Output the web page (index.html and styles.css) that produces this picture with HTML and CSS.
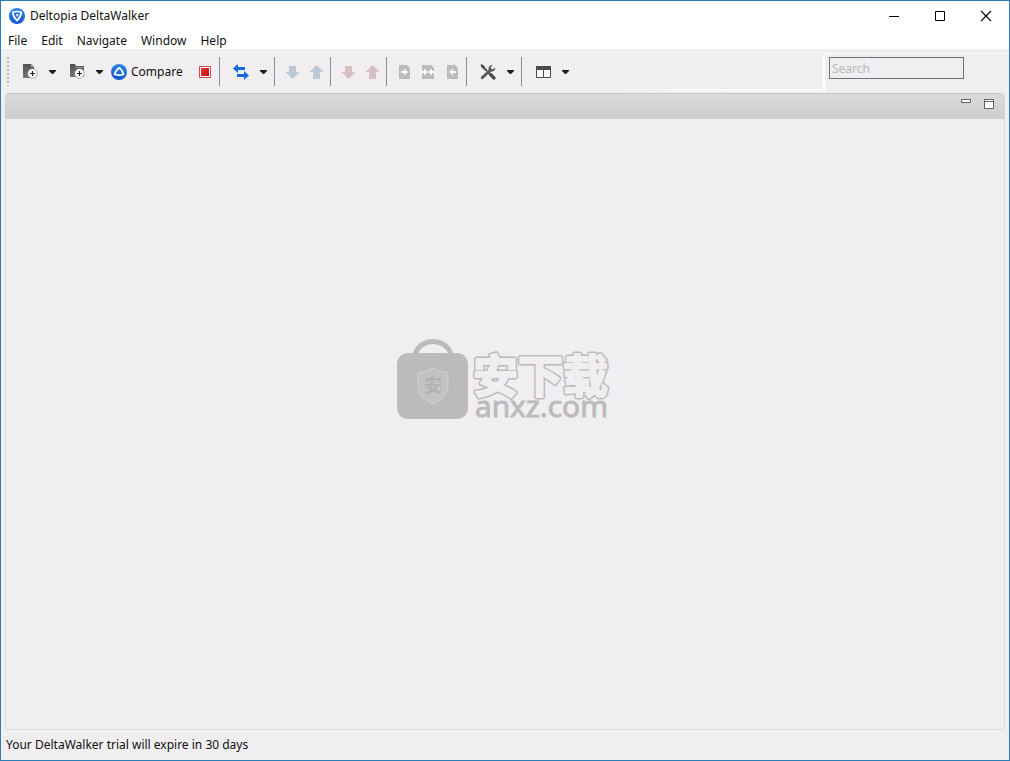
FILE: index.html
```
<!DOCTYPE html>
<html lang="en">
<head>
<meta charset="utf-8">
<title>Deltopia DeltaWalker</title>
<link rel="stylesheet" href="styles.css">
</head>
<body>
<svg class="defs" aria-hidden="true">
  <defs>
    <linearGradient id="dark" x1="0" y1="0" x2="0" y2="1"><stop offset="0" stop-color="#505052"/><stop offset="1" stop-color="#77777a"/></linearGradient>
    <linearGradient id="blue" x1="0" y1="0" x2="0" y2="1"><stop offset="0" stop-color="#2b86ea"/><stop offset="1" stop-color="#1553cf"/></linearGradient>
    <linearGradient id="red" x1="0" y1="0" x2="1" y2="1"><stop offset="0" stop-color="#e8383c"/><stop offset="1" stop-color="#c60d14"/></linearGradient>
    <symbol id="caret" viewBox="0 0 7 4"><path d="M0 0h7v1L4 4H3L0 1z" fill="#1c1c1e"/></symbol>
    <g id="plus"><circle cx="10.500" cy="9.500" r="4.800" fill="#fff" stroke="#88888b" stroke-width=".7"/><path d="M10.500 7v5M8 9.500h5" stroke="#222" stroke-width="1.200"/></g>
    <symbol id="down" viewBox="0 0 16 16"><path d="M5 2h7v6h3.500l-7 7-7-7H5z"/></symbol>
    <symbol id="up" viewBox="0 0 16 16"><path d="M5 15h7V8h3.500l-7-7-7 7H5z"/></symbol>
  </defs>
</svg>
<div class="window">
  <header class="titlebar">
    <svg class="logo" viewBox="0 0 16 16"><circle cx="8" cy="8" r="8" fill="url(#blue)"/><path d="M3.700 4.300q4.300-1.600 8.600 0Q11.800 9 8 12.600 4.200 9 3.700 4.300z" fill="none" stroke="#fff" stroke-width="1.700" stroke-linejoin="round"/><path d="M7 6.300h3L8 9z" fill="#fff"/></svg>
    <h1 class="title">Deltopia DeltaWalker</h1>
    <div class="controls">
      <button class="control" aria-label="Minimize"><svg viewBox="0 0 12 12"><path d="M1 6.500h10" stroke="#000"/></svg></button>
      <button class="control" aria-label="Maximize"><svg viewBox="0 0 12 12"><path d="M1.500 1.500h9v9h-9z" fill="none" stroke="#000"/></svg></button>
      <button class="control" aria-label="Close"><svg viewBox="0 0 12 12"><path d="M1 1l10 10M11 1L1 11" stroke="#000" stroke-width="1.100"/></svg></button>
    </div>
  </header>
  <nav class="menubar">
    <button class="menu">File</button>
    <button class="menu">Edit</button>
    <button class="menu">Navigate</button>
    <button class="menu">Window</button>
    <button class="menu">Help</button>
  </nav>
  <div class="toolrow">
    <div class="toolbar" role="toolbar">
      <span class="grip"></span>
      <div class="group lead">
        <button class="tool" aria-label="New file comparison"><svg viewBox="0 0 16 16"><path d="M1 0h8l3 3v11H1z" fill="url(#dark)"/><path d="M9 0v3h3z" fill="#aaaaad"/><use href="#plus"/></svg></button>
        <button class="drop" aria-label="File comparison options"><svg><use href="#caret"/></svg></button>
        <button class="tool next" aria-label="New folder comparison"><svg viewBox="0 0 16 16"><path d="M1 0h5l1 2h8v11H1z" fill="url(#dark)"/><path d="M7 3h8v1H6z" fill="#8c8c8f"/><use href="#plus"/></svg></button>
        <button class="drop" aria-label="Folder comparison options"><svg><use href="#caret"/></svg></button>
        <button class="compare"><svg viewBox="0 0 16 16"><circle cx="8" cy="8" r="8" fill="url(#blue)"/><path d="M8.500 3.800Q5.500 5.500 3.500 10.300q4.500 1.700 9 .2Q11.800 6.500 8.500 3.800z" fill="none" stroke="#fff" stroke-width="1.700" stroke-linejoin="round"/></svg>Compare</button>
        <button class="tool" aria-label="Stop"><svg viewBox="0 0 16 16"><path d="M2.500 2.500h11v11h-11z" fill="#fff" stroke="#c4484c"/><path d="M4 4h8v8H4z" fill="url(#red)"/></svg></button>
      </div>
      <div class="group wide">
        <button class="tool" aria-label="Swap sides"><svg viewBox="0 0 16 16"><path d="M0 4.500L5 0v3h7v3H5v3zM16 11.500L11 7v3H4v3h7v3z" fill="#1668dc"/></svg></button>
        <button class="drop" aria-label="Swap options"><svg><use href="#caret"/></svg></button>
      </div>
      <div class="group">
        <button class="tool steel" aria-label="Next difference"><svg><use href="#down"/></svg></button>
        <button class="tool steel" aria-label="Previous difference"><svg><use href="#up"/></svg></button>
      </div>
      <div class="group">
        <button class="tool rose" aria-label="Next conflict"><svg><use href="#down"/></svg></button>
        <button class="tool rose" aria-label="Previous conflict"><svg><use href="#up"/></svg></button>
      </div>
      <div class="group">
        <button class="tool pale" aria-label="Copy right"><svg viewBox="0 0 16 16"><path d="M3 1h8l3 3v11H3z"/><path d="M5 7h3V4.500L12 8l-4 3.500V9H5z" fill="#fff"/></svg></button>
        <button class="tool pale" aria-label="Merge both"><svg viewBox="0 0 16 16"><path d="M2 1h9l3 3v11H2z"/><path d="M1 7h3V4.500L8 8l-4 3.500V9H1zM15 7h-3V4.500L8 8l4 3.500V9h3z" fill="#fff"/></svg></button>
        <button class="tool pale" aria-label="Copy left"><svg viewBox="0 0 16 16"><path d="M3 1h8l3 3v11H3z"/><path d="M12 7H9V4.500L5 8l4 3.500V9h3z" fill="#fff"/></svg></button>
      </div>
      <div class="group wide">
        <button class="tool" aria-label="Tools"><svg viewBox="0 0 16 16"><path d="M2 2l5 5M8.500 8.500l5 5" stroke="#4a4a4c" stroke-width="2"/><path d="M10.500 10.500l3.500 3.500" stroke="#4a4a4c" stroke-width="3.200" stroke-linecap="round"/><path d="M.5 1L1.500 0 4.500 2 5 5 2 4z" fill="#4a4a4c"/><path d="M2.200 13.800L10.500 6" stroke="#58585a" stroke-width="2.800" stroke-linecap="round"/><path d="M12.800.8A4 4 0 0 0 8.700 6L10.500 7.500A4 4 0 0 0 15.400 3.400L13.200 5.200 11 4.800 10.800 2.800z" fill="#58585a"/></svg></button>
        <button class="drop" aria-label="Tools options"><svg><use href="#caret"/></svg></button>
      </div>
      <div class="group wide">
        <button class="tool" aria-label="Layout"><svg viewBox="0 0 16 16"><path d="M1.500 2.500h14v11h-14z" fill="#fafafa" stroke="#4c4c4e"/><path d="M1 2h15v4H1z" fill="#4c4c4e"/><path d="M8.500 6v8" stroke="#4c4c4e"/></svg></button>
        <button class="drop" aria-label="Layout options"><svg><use href="#caret"/></svg></button>
      </div>
    </div>
    <div class="searchbox"><input class="search" type="text" placeholder="Search" aria-label="Search"></div>
  </div>
  <main class="pane">
    <div class="tabs">
      <button class="panebtn" aria-label="Minimize pane"><svg viewBox="0 0 12 12"><path d="M1.500 1.500h9v3h-9z" fill="#fff" stroke="#626264"/></svg></button>
      <button class="panebtn" aria-label="Maximize pane"><svg viewBox="0 0 12 12"><path d="M1.500 1.500h9v9h-9zM1 3.500h10" fill="#fff" stroke="#626264"/></svg></button>
    </div>
    <div class="stage">
      <svg class="watermark" viewBox="0 0 216 82" role="img" aria-label="anxz.com">
        <defs><text id="brand" x="76" y="54" class="brand">安下载</text></defs>
        <path d="M18 16C22-2 50-2 54 16" fill="none" stroke="#bbb" stroke-width="5"/>
        <rect y="14" width="71" height="66" rx="11" fill="#bbb"/>
        <path d="M36 29q7 4 15 5v14q0 10-15 17-15-7-15-17V34q8-1 15-5z" fill="#c3c3c4" stroke="#d0d0d1"/>
        <text x="27" y="53" class="crest">安</text>
        <use href="#brand" class="outer"/>
        <use href="#brand" class="inner"/>
        <text x="78" y="78" class="domain">anxz.com</text>
      </svg>
    </div>
  </main>
  <footer class="status">Your DeltaWalker trial will expire in 30 days</footer>
</div>
</body>
</html>
```

FILE: styles.css
```
* { box-sizing: border-box; }
body {
  margin: 0;
  font: 12px/16px "Noto Sans", sans-serif;
  color: #111;
}
button {
  margin: 0;
  padding: 0;
  border: 0;
  background: none;
  font: inherit;
  color: inherit;
}
svg { display: block; }
.defs { position: absolute; width: 0; height: 0; }
.window {
  display: flex;
  flex-direction: column;
  min-height: 100vh;
  border: 1px solid #2d7cb5;
  background: #f0eef1;
}
.titlebar {
  display: flex;
  align-items: center;
  height: 30px;
  padding-left: 8px;
  background: #fff;
}
.logo { width: 16px; height: 16px; margin-right: 5px; }
.title { margin: 0; font-size: 12px; font-weight: 400; }
.controls { display: flex; margin-left: auto; }
.control {
  display: grid;
  place-items: center;
  width: 46px;
  height: 30px;
}
.control svg, .panebtn svg { width: 12px; height: 12px; }
.menubar {
  display: flex;
  gap: 14px;
  height: 18px;
  padding: 1px 0 0 7px;
  background: #fff;
}
.toolrow { display: flex; height: 44px; }
.toolbar {
  flex: 1;
  display: flex;
  align-items: center;
  padding: 5px 0 0 6px;
  margin-bottom: 2px;
  border-bottom: 2px solid;
  border-image: linear-gradient(90deg, #f0eef1 75%, #fff 90%) 1;
}
.grip {
  width: 2px;
  height: 29px;
  background: repeating-linear-gradient(#b9b9b3 0 2px, transparent 2px 4px);
}
.group {
  display: flex;
  align-items: center;
  height: 29px;
  padding: 0 2px 0 5px;
  border-left: 1px solid #8d8d8f;
}
.lead { padding-left: 9px; border-left: 0; }
.wide { padding: 0 0 0 9px; }
.tool, .drop { display: grid; place-items: center; height: 24px; }
.tool { width: 24px; }
.drop { width: 21px; }
.next { margin-left: 2px; }
.tool svg, .compare svg { width: 16px; height: 16px; }
.drop svg { width: 7px; height: 4px; }
.compare {
  display: flex;
  align-items: center;
  gap: 4px;
  width: 83px;
  padding-left: 1px;
}
.steel { fill: #bec8d5; }
.rose { fill: #d5c0c2; }
.pale { fill: #bcbcbe; }
.searchbox {
  width: 186px;
  height: 38px;
  margin-top: 4px;
  padding: 3px 4px;
  border: solid #fff;
  border-width: 1px 0 0 2px;
  border-top-left-radius: 3px;
}
.search {
  display: block;
  width: 135px;
  height: 22px;
  padding: 0 2px;
  border: 1px solid #707074;
  border-radius: 0;
  background: #f0eef1;
  font: inherit;
}
.search::placeholder { color: #b9b8bb; opacity: 1; }
.pane {
  flex: 1;
  display: flex;
  flex-direction: column;
  margin: 0 4px;
  border: 1px solid #dedde0;
  border-top: 0;
  border-radius: 5px 5px 0 0;
}
.tabs {
  display: flex;
  justify-content: flex-end;
  align-items: flex-start;
  gap: 11px;
  height: 26px;
  margin: 0 -1px;
  padding: 4px 10px 0 0;
  border-top: 1px solid #c8c7c9;
  border-radius: 5px 5px 0 0;
  background: linear-gradient(#dbdadc, #cdcccf);
}
.panebtn { width: 12px; height: 12px; }
.stage {
  flex: 1;
  display: grid;
  place-items: center;
  padding-bottom: 88px;
}
.watermark { width: 216px; height: 82px; overflow: visible; }
.brand {
  font: 700 45px "Noto Sans CJK SC", sans-serif;
  stroke-linejoin: round;
}
.outer { fill: #bbb; stroke: #bbb; stroke-width: 5px; }
.inner { fill: #f0eef1; stroke: #f0eef1; stroke-width: 2px; }
.crest { font: 700 18px "Noto Sans CJK SC", sans-serif; fill: #b2b2b3; }
.domain { font: 30px "Open Sans", sans-serif; fill: #bbb; stroke: #bbb; }
.status { height: 30px; padding: 7px 5px; }
```
